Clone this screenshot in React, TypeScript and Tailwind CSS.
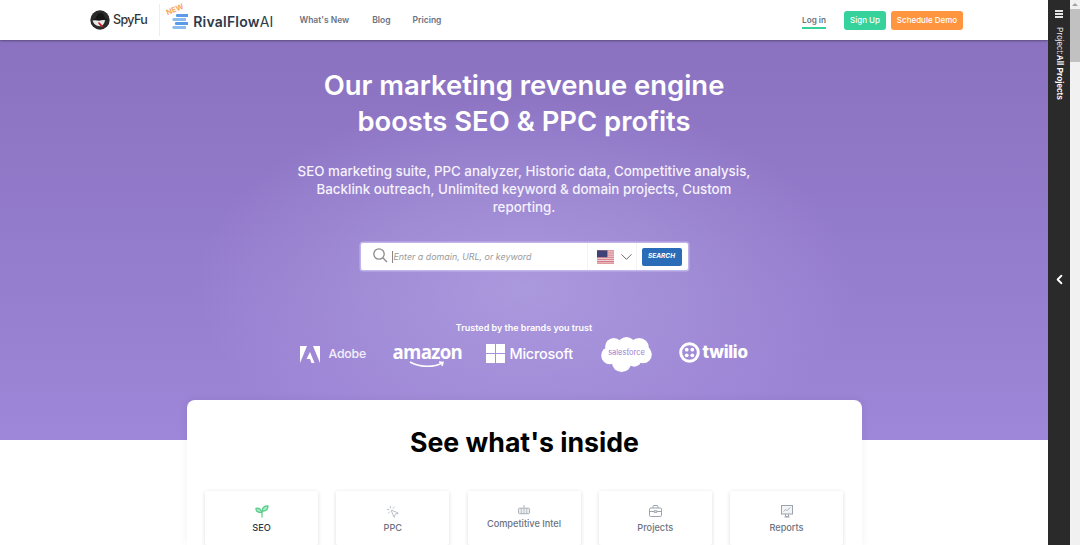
import React from 'react';
import { ChevronDown, ChevronLeft, MousePointerClick } from 'lucide-react';

const Flag = () => (
	<svg width="18" height="14" viewBox="0 0 18 14">
		<rect width="18" height="14" fill="#f5eeee" />
		{[0, 2.2, 4.4, 6.6, 8.8, 11, 12.9].map((y) => (
			<rect key={y} y={y} width="18" height="1.1" fill="#cf6470" />
		))}
		<rect width="11" height="7.2" fill="#3f4277" />
	</svg>
);

const SpyFuMark = () => (
	<svg width="20" height="20" viewBox="0 0 20 20">
		<circle cx="10" cy="10" r="9.7" fill="#2a2a2a" />
		<path d="M2.5 10.5 C5 9.5 7 10 9 10.5 L15 9 C15 12 14 14.5 11.5 16 C7 17 3.5 14 2.5 10.5 Z" fill="#e9e9e9" />
		<path d="M5.5 8.5 C6.5 5.5 8 3 10.5 3 C13 3 14.5 5.5 15 8 L18.5 9.5 L9 10.5 L2.5 10 Z" fill="#161616" />
		<path d="M9 12 L13.5 16.5 L11 17 L8 13 Z" fill="#c8202f" />
	</svg>
);

const RivalMark = () => (
	<svg width="16" height="15" viewBox="0 0 16 15">
		<path d="M5 0 H16 V3 H5 C3.5 3 3.5 0 5 0 Z" fill="#5b9be6" />
		<path d="M1.5 4 H14 V7 H1.5 C0 7 0 4 1.5 4 Z" fill="#8bbcf0" />
		<path d="M4 8 H16 V11 H4 C2.5 11 2.5 8 4 8 Z" fill="#5b9be6" />
		<path d="M1.5 12 H14 V15 H1.5 C0 15 0 12 1.5 12 Z" fill="#8bbcf0" />
	</svg>
);

const AdobeMark = () => (
	<svg width="20" height="17" viewBox="0 0 20 17" fill="#fff">
		<path d="M0 0 H7 L0 17 Z" />
		<path d="M13 0 H20 V17 Z" />
		<path d="M10 6 L14.5 17 H11.5 L10 13 H6.5 Z" />
	</svg>
);

const WindowsMark = () => (
	<svg width="19" height="19" viewBox="0 0 19 19" fill="#fff">
		<rect width="9" height="9" />
		<rect x="10" width="9" height="9" />
		<rect y="10" width="9" height="9" />
		<rect x="10" y="10" width="9" height="9" />
	</svg>
);

const SalesforceCloud = () => (
	<svg width="51" height="35" viewBox="0 0 52 36" fill="#fff">
		<circle cx="13" cy="10" r="9" />
		<circle cx="26" cy="9" r="9" />
		<circle cx="39" cy="11" r="10" />
		<circle cx="43" cy="18" r="9" />
		<circle cx="9" cy="19" r="9" />
		<circle cx="21" cy="26" r="10" />
		<circle cx="34" cy="23" r="7.5" />
	</svg>
);

const TwilioMark = () => (
	<svg width="21" height="21" viewBox="0 0 21 21" fill="none">
		<circle cx="10.5" cy="10.5" r="8.8" stroke="#fff" strokeWidth="3" />
		<circle cx="7.7" cy="7.7" r="1.9" fill="#fff" />
		<circle cx="13.3" cy="7.7" r="1.9" fill="#fff" />
		<circle cx="7.7" cy="13.3" r="1.9" fill="#fff" />
		<circle cx="13.3" cy="13.3" r="1.9" fill="#fff" />
	</svg>
);

const SproutMark = () => (
	<svg width="14" height="13" viewBox="0 0 15 14" fill="#a9e8c4" stroke="#55cb88" strokeWidth="1.3" strokeLinejoin="round">
		<path d="M7 8 C2.5 8.5 0.8 6.5 1 3.5 C4.5 3 7 4.5 7 8 Z" />
		<path d="M8 6.5 C7.5 3 9.5 1 14 1 C14 4.5 12 7 8 6.5 Z" />
		<path d="M7.5 13.5 V6.5" fill="none" />
	</svg>
);

const IntelMark = () => (
	<svg width="14" height="11" viewBox="0 0 14 12" fill="none" stroke="#a3a9b3" strokeWidth="1">
		<path d="M7 0 V3" />
		<rect x="1" y="3.5" width="12" height="6" rx="1" fill="#eceef1" />
		<path d="M4 3.5 V9.5 M7 3.5 V9.5 M10 3.5 V9.5" opacity="0.7" />
	</svg>
);

const BagMark = () => (
	<svg width="13" height="12" viewBox="0 0 13 12" fill="none" stroke="#9ca3af" strokeWidth="1">
		<rect x="0.5" y="3" width="12" height="8.5" rx="1.2" />
		<path d="M4 3 V1.5 C4 1 4.4 0.5 5 0.5 H8 C8.6 0.5 9 1 9 1.5 V3" />
		<path d="M0.5 6.5 H5 M8 6.5 H12.5 M5 5.8 H8 V7.3 H5 Z" />
	</svg>
);

const ReportMark = () => (
	<svg width="12" height="13" viewBox="0 0 12 13" fill="none" stroke="#9ca3af" strokeWidth="1">
		<rect x="0.5" y="0.5" width="11" height="8.5" fill="#f3f4f6" />
		<path d="M2.5 6.5 L4.5 4.5 L6 5.5 L9.5 2.5" strokeWidth="0.8" />
		<path d="M4.5 9 V11.5 H7.5 V9 M3.5 12 H8.5" />
	</svg>
);

const tabs = [
	{ label: 'SEO', icon: <SproutMark />, active: true, tight: false },
	{ label: 'PPC', icon: <MousePointerClick size={14} strokeWidth={1.2} className="text-[#9ca3af]" />, active: false, tight: false },
	{ label: 'Competitive Intel', icon: <IntelMark />, active: false, tight: true },
	{ label: 'Projects', icon: <BagMark />, active: false, tight: false },
	{ label: 'Reports', icon: <ReportMark />, active: false, tight: false },
];

const Header = () => (
	<header className="relative z-10 h-10 bg-white shadow-[0_1px_2px_rgba(0,0,0,0.35)] flex items-center pl-[90px] font-['Inter',sans-serif]">
		<div className="flex items-center gap-[3px]">
			<SpyFuMark />
			<span className="text-[12.5px] font-medium tracking-[-0.6px] text-[#333]">SpyFu</span>
		</div>
		<div className="w-px h-8 bg-[#eee] ml-[12px] mr-[12px]" />
		<div className="relative flex items-center gap-[5px] mt-[2px]">
			<span className="absolute left-[-6px] top-[-5px] -rotate-[22deg] text-[7.5px] font-bold text-[#f9a35b] leading-none">NEW</span>
			<RivalMark />
			<span className="text-[14px] font-semibold tracking-[0.2px] text-[#2e3a4a]">RivalFlow<span className="font-normal">AI</span></span>
		</div>
		<nav className="flex items-center gap-[22px] ml-[26px] text-[8.5px] font-semibold text-[#6b7280]">
			<span className="mr-px">What's New</span>
			<span>Blog</span>
			<span>Pricing</span>
		</nav>
		<div className="ml-auto flex items-center mr-[85px]">
			<span className="text-[8.2px] font-semibold text-[#6b7280] border-b-2 border-[#35d29b] pb-[1px] pt-[3px]">Log in</span>
			<button className="ml-[18px] w-[42px] h-[19px] rounded-[3px] bg-[#35d29b] text-white text-[8px] font-medium">Sign Up</button>
			<button className="ml-[5px] w-[72px] h-[19px] rounded-[3px] bg-[#ff963f] text-white text-[8px] font-medium">Schedule Demo</button>
		</div>
	</header>
);

const Hero = () => (
	<section className="h-[400px] flex flex-col items-center bg-[radial-gradient(ellipse_330px_190px_at_50%_62%,rgba(178,162,226,0.75)_0%,rgba(178,162,226,0)_100%),linear-gradient(180deg,#8a72c0_0%,#9e86d8_100%)] text-white font-['Inter',sans-serif]">
		<h1 className="mt-[27px] text-[27.4px] leading-[36px] font-semibold text-center">
			Our marketing revenue engine<br />boosts SEO &amp; PPC profits
		</h1>
		<p className="mt-[23px] w-[470px] text-[13.35px] leading-[18px] font-medium text-center text-[#f5f2fc]">
			SEO marketing suite, PPC analyzer, Historic data, Competitive analysis, Backlink outreach, Unlimited keyword &amp; domain projects, Custom reporting.
		</p>
		<div className="mt-[27px] w-[327px] h-[27px] rounded-[2px] bg-white shadow-[0_0_0_1.5px_rgba(200,190,240,0.8)] flex items-center">
			<svg width="15" height="15" viewBox="0 0 15 15" fill="none" stroke="#8a8a8a" strokeWidth="1.3" className="ml-[12px] mb-[3px]">
				<circle cx="6" cy="6" r="5.2" />
				<path d="M10 10 L14 14" />
			</svg>
			<span className="ml-[4px] border-l border-[#888] pl-[1px] text-[8.9px] italic leading-[12px] text-[#9a9a9a]">Enter a domain, URL, or keyword</span>
			<div className="ml-auto h-full w-[50px] border-x border-[#f3f3f3] flex items-center pl-[9px] gap-[3px]">
				<Flag />
				<ChevronDown size={20} strokeWidth={1.1} className="text-[#555]" />
			</div>
			<button className="ml-[5px] mr-[6px] w-[40px] h-[18px] rounded-[2px] bg-[#2b6cb8] text-white text-[6.5px] font-bold italic">SEARCH</button>
		</div>
		<div className="mt-[52px] text-[9px] font-semibold leading-[12px]">Trusted by the brands you trust</div>
		<div className="mt-[2px] w-[449px] flex items-center text-white">
			<div className="flex items-center gap-[9px] w-[93px] shrink-0">
				<AdobeMark />
				<span className="text-[12.3px] tracking-[-0.2px] font-medium text-[#f3effb]">Adobe</span>
			</div>
			<div className="flex flex-col items-start w-[93px] shrink-0 leading-none mt-[3px]">
				<span className="text-[18.7px] font-bold tracking-[-0.7px] leading-[18px] font-['Open_Sans',sans-serif]">amazon</span>
				<svg width="36" height="7" viewBox="0 0 36 7" fill="none" stroke="#fff" strokeWidth="1.5" className="ml-[16px]">
					<path d="M1 1 C10 6 24 7 33 2 M30 1 L34 1.5 L33 5" />
				</svg>
			</div>
			<div className="flex items-center gap-[5px] w-[115px] shrink-0">
				<WindowsMark />
				<span className="text-[14.4px] font-medium tracking-[-0.2px]">Microsoft</span>
			</div>
			<div className="relative w-[78px] shrink-0 h-[36px] flex items-center">
				<SalesforceCloud />
				<span className="absolute left-[6px] top-[13px] w-[40px] text-center text-[7.5px] text-[#9a82d4] leading-none">salesforce</span>
			</div>
			<div className="flex items-center gap-[3px] mb-[3px] shrink-0">
				<TwilioMark />
				<span className="text-[17px] font-extrabold tracking-[-0.2px]">twilio</span>
			</div>
		</div>
	</section>
);

const Inside = () => (
	<section className="relative -mt-10 w-[675px] ml-[187px] bg-white rounded-t-lg shadow-[0_0_10px_rgba(0,0,0,0.06)] pt-[24px] px-[18px] font-['Inter',sans-serif]">
		<h2 className="text-[26.7px] leading-[36px] font-bold text-center text-black">See what's inside</h2>
		<div className="mt-[31px] flex gap-[18.25px]">
			{tabs.map((tab) => (
				<div key={tab.label} className="w-[113px] h-[54px] shrink-0 rounded-[2px] bg-white shadow-[0_1px_4px_rgba(0,0,0,0.14)] flex flex-col items-center">
					<div className={tab.tight ? 'mt-[14px] h-[12px]' : 'mt-[14px] h-[15px]'}>{tab.icon}</div>
					<span className={`${tab.tight ? 'mt-[1px]' : 'mt-[2px]'} text-[9.2px] leading-[12px] font-medium ${tab.active ? 'text-[#2f3743]' : 'text-[#6b7280]'}`}>{tab.label}</span>
				</div>
			))}
		</div>
	</section>
);

const SideBar = () => (
	<aside className="w-[22px] shrink-0 h-full bg-[#2a2a2a] flex flex-col items-center text-white font-['Liberation_Sans',sans-serif]">
		<div className="mt-[10px] w-[8px] flex flex-col gap-[1px]">
			<div className="h-[2px] bg-[#e5e5e5]" />
			<div className="h-[2px] bg-[#e5e5e5]" />
			<div className="h-[2px] bg-[#e5e5e5]" />
		</div>
		<div className="mt-[9px] [writing-mode:vertical-rl] text-[8.2px] leading-[11px] text-[#e5e5e5]">
			Project:<span className="font-bold text-white">All Projects</span>
		</div>
		<ChevronLeft size={15} strokeWidth={3} className="mt-[172px] text-white" />
	</aside>
);

const ScrollBar = () => (
	<div className="w-[10px] shrink-0 h-full bg-[#f1f1f1] flex flex-col items-center">
		<div className="mt-[3px] w-0 h-0 border-x-[3px] border-x-transparent border-b-[3px] border-b-[#a3a3a3]" />
		<div className="mt-[3px] w-full h-[53px] bg-[#c1c1c1]" />
	</div>
);

export default function App() {
	return (
		<div className="w-[1080px] h-[545px] overflow-hidden flex bg-white">
			<main className="w-[1048px] shrink-0 h-full overflow-hidden">
				<Header />
				<Hero />
				<Inside />
			</main>
			<SideBar />
			<ScrollBar />
		</div>
	);
}
